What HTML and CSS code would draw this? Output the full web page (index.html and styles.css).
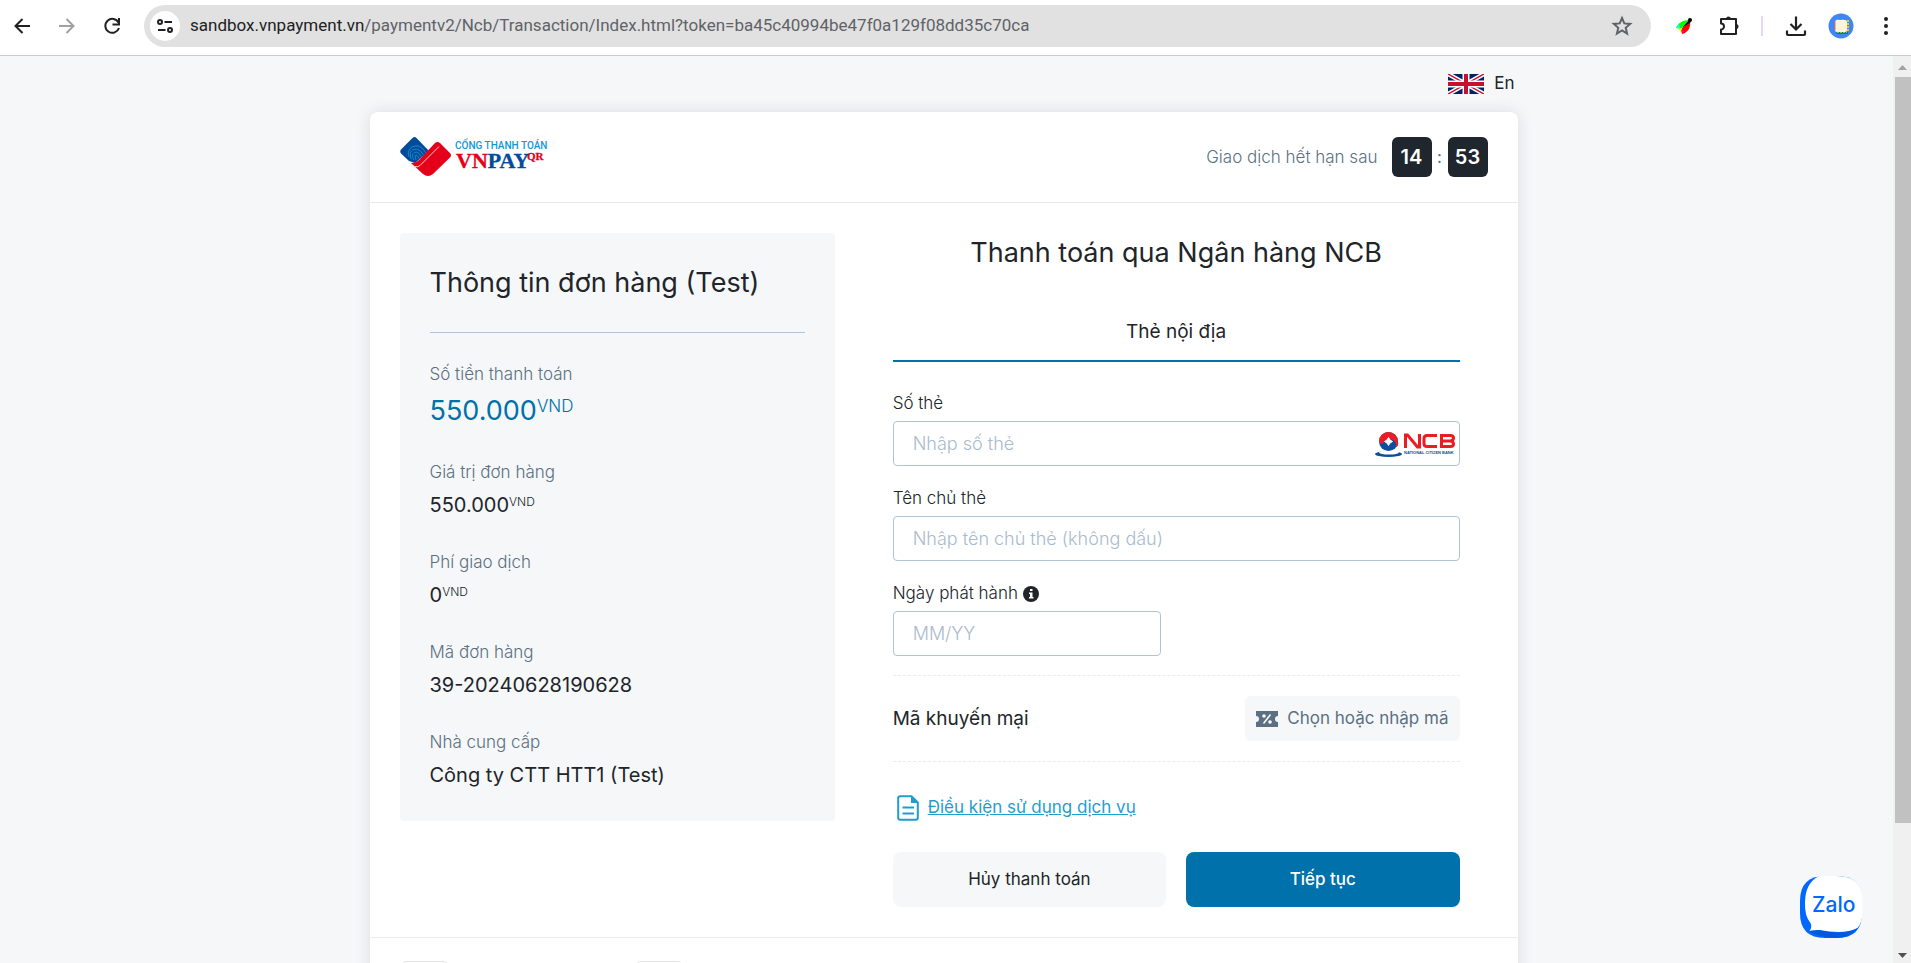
FILE: index.html
```html
<!DOCTYPE html>
<html lang="vi">
<head>
<meta charset="utf-8">
<title>Cổng thanh toán VNPAY</title>
<link rel="stylesheet" href="styles.css">
</head>
<body>
<header class="toolbar">
  <button class="tool" aria-label="Back"><svg width="20" height="20" viewBox="0 0 20 20" fill="none" stroke="#202124" stroke-width="2"><path d="M17 10H3M9.500 3 2.500 10l7 7"/></svg></button>
  <button class="tool" aria-label="Forward"><svg width="20" height="20" viewBox="0 0 20 20" fill="none" stroke="#a0a0a0" stroke-width="2"><path d="M1 10h14M8.500 3l7 7-7 7"/></svg></button>
  <button class="tool" aria-label="Reload"><svg width="20" height="20" viewBox="0 0 20 20" fill="none" stroke="#202124" stroke-width="2"><path d="M15.500 6.500A7 7 0 1 0 16 12"/><path d="M16 2v6.500H9.500"/></svg></button>
  <div class="omnibox">
    <button class="site-info" aria-label="Site information"><svg width="18" height="18" viewBox="0 0 18 18" fill="none" stroke="#202124" stroke-width="2"><circle cx="4" cy="5" r="2"/><path d="M8.500 5H16M2 13h7.500"/><circle cx="14" cy="13" r="2"/></svg></button>
    <span class="url"><span class="host">sandbox.vnpayment.vn</span>/paymentv2/Ncb/Transaction/Index.html?token=ba45c40994be47f0a129f08dd35c70ca</span>
    <button class="star" aria-label="Bookmark"><svg width="22" height="22" viewBox="0 0 22 22" fill="none" stroke="#5f6368" stroke-width="2"><path d="M11 3l2.300 5.400 5.900.5-4.500 3.900 1.400 5.800L11 15.500l-5.100 3.100 1.400-5.800-4.500-3.900 5.900-.5z"/></svg></button>
  </div>
  <div class="extensions">
    <button class="tool" aria-label="IDM"><svg width="20" height="20" viewBox="0 0 20 20"><path d="M2 12C4 7 9 4 15 4L7 13z" fill="#0f0"/><path d="M2 12l3-4 1 4z" fill="#0ff"/><path d="M16 6c1 6-3 11-8 12l-1-5z" fill="#f00"/><path d="M4 13l4-1-1 5z" fill="#ff0"/><path d="M8 17l-1-3 3 1z" fill="#f0f"/><path d="M8 12l7-8 2 2z" fill="#000"/><circle cx="16" cy="4" r="2" fill="#000"/></svg></button>
    <button class="tool" aria-label="Extensions"><svg width="24" height="24" viewBox="0 0 24 24"><path d="M4 5h15v15H4v-4.500a3 3 0 0 0 0-6z" fill="none" stroke="#202124" stroke-width="2" stroke-linejoin="round"/><path d="M9 5a2.500 2.500 0 0 1 5 0zM19 10a2.500 2.500 0 0 1 0 5z" fill="#202124"/></svg></button>
    <span class="divider"></span>
    <button class="tool" aria-label="Downloads"><svg width="24" height="24" viewBox="0 0 24 24" fill="none" stroke="#202124" stroke-width="2.200"><path d="M12 2.500V15M6.500 10l5.500 5.500 5.500-5.500M3 16.500V20q0 1 1 1h16q1 0 1-1v-3.500"/></svg></button>
    <button class="tool" aria-label="Profile"><svg width="26" height="26" viewBox="0 0 26 26"><circle cx="13" cy="13" r="12.500" fill="#4285f4"/><path d="M8 19h12v2H9z" fill="#1a5fe0"/><rect x="7" y="7" width="12" height="12" rx="2" fill="#fff4d9"/><path d="M8 6.500h10" stroke="#5bd12a" stroke-dasharray="3 2"/><path d="M7 8v9" stroke="#e8743a"/><path d="M20 7v12" stroke="#f3c81c" stroke-width="2" stroke-dasharray="2 1"/><path d="M9 19.500h10" stroke="#7fd13a" stroke-dasharray="2 1"/></svg></button>
    <button class="tool" aria-label="Menu"><svg width="20" height="20" viewBox="0 0 20 20" fill="#202124"><circle cx="10" cy="3" r="2"/><circle cx="10" cy="10" r="2"/><circle cx="10" cy="17" r="2"/></svg></button>
  </div>
</header>
<div class="viewport">
  <main class="page">
    <div class="shell">
      <div class="language">
        <a class="lang-link" href="#en">
          <svg width="36" height="20" viewBox="0 0 36 20"><rect width="36" height="20" fill="#012169"/><path d="M0 0l36 20M36 0L0 20" stroke="#fff" stroke-width="4.500"/><path d="M0 0l36 20M36 0L0 20" stroke="#c8102e" stroke-width="1.500"/><path d="M18 0v20M0 10h36" stroke="#fff" stroke-width="7"/><path d="M18 0v20M0 10h36" stroke="#c8102e" stroke-width="4"/></svg>
          <span>En</span>
        </a>
      </div>
      <section class="card">
        <div class="card-head">
          <svg class="logo" width="148" height="40" viewBox="0 0 148 40" role="img" aria-label="Cổng thanh toán VNPAY QR">
            <path d="M1 12.500 12.500 1q2-2 4 0L29 14 15 26 9 24 1 16.500q-1.500-2 0-4z" fill="#004c9b"/>
            <g fill="none" stroke="#1b86d0" stroke-width="1"><path d="M9 20q-2-7 3-10 6-3 11 2l3 4"/><path d="M11 22q-2-7 1.500-9 4.500-2.500 8 1l3 4"/><path d="M13.500 23q-2-6 .5-7.500 3-1.500 5 1l2.500 3.500"/><path d="M16 23l-1-4q1-2 2.500 0l2 3"/></g>
            <path d="M11 26q5 0 8-3L35 6q2.500-2 5 0l10 10q2 2 0 4.500L33 37q-5 4-10 0z" fill="#e50019"/>
            <path d="M15 29.500q3 1 5-1L39 9.500" fill="none" stroke="#fff" stroke-width="1" opacity=".8"/>
            <text x="55" y="12" class="logo-top">CỔNG THANH TOÁN</text>
            <text x="56" y="31" class="logo-name"><tspan class="red">VN</tspan><tspan class="blue">PAY</tspan></text>
            <text x="127" y="23" class="logo-qr red">QR</text>
          </svg>
          <div class="timer">
            <span class="timer-label">Giao dịch hết hạn sau</span>
            <span class="timer-box">14</span><span class="timer-sep">:</span><span class="timer-box">53</span>
          </div>
        </div>
        <div class="card-body">
          <section class="order">
            <h2 class="order-title">Thông tin đơn hàng (Test)</h2>
            <dl class="order-list">
              <div class="order-item total"><dt>Số tiền thanh toán</dt><dd>550.000<span class="unit">VND</span></dd></div>
              <div class="order-item"><dt>Giá trị đơn hàng</dt><dd>550.000<span class="unit">VND</span></dd></div>
              <div class="order-item"><dt>Phí giao dịch</dt><dd>0<span class="unit">VND</span></dd></div>
              <div class="order-item"><dt>Mã đơn hàng</dt><dd>39-20240628190628</dd></div>
              <div class="order-item"><dt>Nhà cung cấp</dt><dd>Công ty CTT HTT1 (Test)</dd></div>
            </dl>
          </section>
          <form class="pay">
            <h1 class="pay-title">Thanh toán qua Ngân hàng NCB</h1>
            <div class="tab">Thẻ nội địa</div>
            <div class="field">
              <label for="card-number">Số thẻ</label>
              <div class="control">
                <input id="card-number" type="text" placeholder="Nhập số thẻ">
                <svg class="bank" width="80" height="28" viewBox="0 0 80 28" role="img" aria-label="NCB">
                  <ellipse cx="13.500" cy="24" rx="13.500" ry="3" fill="#0d4f9e"/><ellipse cx="14" cy="22.500" rx="10" ry="2" fill="#fff"/>
                  <circle cx="13.500" cy="11.500" r="9.500" fill="#0d4f9e"/><path d="M4 11.500a9.500 9.500 0 0 1 19 0q1 4-2 6 1-6-4-8-6-2-8 3-3 3-5-1z" fill="#ed1c24"/><path d="M13.500 7.500q1 3 4 4-3 1-4 4-1-3-4-4 3-1 4-4z" fill="#fff" stroke="#fff"/>
                  <g fill="none" stroke="#ed1c24" stroke-width="3"><path d="M30.500 18V5h2l10 12h2V4"/><path d="M62 5.500H52q-3 0-3 3v5q0 3 3 3h10"/><path d="M66 11h12M66.500 5.500h9q3 0 3 2.500t-3 3q3 .5 3 3t-3 2.500h-9z"/></g>
                  <text x="29" y="24" class="bank-name">NATIONAL CITIZEN BANK</text>
                </svg>
              </div>
            </div>
            <div class="field">
              <label for="card-holder">Tên chủ thẻ</label>
              <input id="card-holder" type="text" placeholder="Nhập tên chủ thẻ (không dấu)">
            </div>
            <div class="field half">
              <label for="issue-date">Ngày phát hành
                <svg width="16" height="16" viewBox="0 0 16 16"><circle cx="8" cy="8" r="8" fill="#212529"/><path d="M7 3h2.500v2H7zM6 6.500h3.500V11h1v1.500H6V11h1V8H6z" fill="#fff"/></svg>
              </label>
              <input id="issue-date" type="text" placeholder="MM/YY">
            </div>
            <div class="promo">
              <span class="promo-label">Mã khuyến mại</span>
              <button type="button" class="promo-button">
                <svg width="22" height="16" viewBox="0 0 22 16"><path d="M0 0h22v5a3 3 0 0 0 0 6v5H0v-5a3 3 0 0 0 0-6z" fill="#5b7083"/><path d="M7.500 12.500l7-9" stroke="#fff" stroke-width="1.500"/><circle cx="8" cy="5" r="1.800" fill="#fff"/><circle cx="14" cy="11" r="1.800" fill="#fff"/></svg>
                <span>Chọn hoặc nhập mã</span>
              </button>
            </div>
            <a class="terms" href="#terms">
              <svg width="22" height="26" viewBox="0 0 22 26"><path d="M3 1.200h11.500l6.300 6.300V23q0 1.800-1.800 1.800H3Q1.200 24.800 1.200 23V3Q1.200 1.200 3 1.200z" fill="none" stroke="#1f9ecd" stroke-width="2"/><path d="M14 1v7h7z" fill="#1f9ecd"/><path d="M5.500 12.500h11.500M5.500 18.500h11.500" stroke="#1f9ecd" stroke-width="2"/></svg>
              <span>Điều kiện sử dụng dịch vụ</span>
            </a>
            <div class="actions">
              <button type="button" class="btn">Hủy thanh toán</button>
              <button type="submit" class="btn primary">Tiếp tục</button>
            </div>
          </form>
        </div>
        <div class="card-foot"><span class="contact"></span><span class="contact"></span></div>
      </section>
    </div>
  </main>
  <div class="scrollbar">
    <svg width="17" height="21" viewBox="0 0 17 21"><path d="M4 14l4.500-5 4.500 5z" fill="#a3a3a3"/></svg>
    <span class="thumb"></span>
    <svg width="17" height="17" viewBox="0 0 17 17"><path d="M4 7l4.500 5L13 7z" fill="#505050"/></svg>
  </div>
</div>
<a class="zalo" href="#zalo" aria-label="Zalo">
  <svg width="64" height="64" viewBox="0 0 64 64"><path d="M26 1h12q25 0 25 25v12q0 25-25 25H26Q1 63 1 38V26Q1 1 26 1z" fill="#0068ff"/><path d="M20 1h18q25.500 0 25.500 25v12q0 9-5 15-13 7-38 2l-10 1q3-4 1-8-6-7-5.500-20Q6 8 20 1z" fill="#fff"/><path d="M10 56q10 7 26 7 15 0 23-10-14 8-40 2z" fill="#005ae0"/><text x="13" y="37" class="zalo-text">Zalo</text></svg>
</a>
</body>
</html>
```
FILE: styles.css
```css
* { box-sizing: border-box; }
body {
  margin: 0;
  height: 100vh;
  display: flex;
  flex-direction: column;
  overflow: hidden;
  font-family: Inter, "Noto Sans", sans-serif;
  font-size: 17px;
  line-height: 27px;
  color: #212529;
  background: #f5f7f9;
}
h1, h2, dl, dd { margin: 0; font-weight: 400; }
button, input { font: inherit; color: inherit; }
svg { display: block; flex: none; }

/* Browser toolbar */
.toolbar {
  flex: none;
  display: flex;
  align-items: center;
  height: 56px;
  padding: 0 3px 4px 0;
  background: #fff;
  border-bottom: 1px solid #c9cccf;
}
.tool {
  display: grid;
  place-items: center;
  width: 45px;
  height: 36px;
  padding: 0;
  border: 0;
  background: none;
}
.omnibox {
  flex: 1;
  display: flex;
  align-items: center;
  height: 42px;
  margin-left: 9px;
  padding: 0 18px 0 6px;
  border-radius: 21px;
  background: #e1e1e1;
}
.site-info {
  display: grid;
  place-items: center;
  width: 30px;
  height: 30px;
  padding: 0;
  border: 0;
  border-radius: 50%;
  background: #fff;
}
.url {
  flex: 1;
  margin-left: 10px;
  font-family: Roboto, "Noto Sans", sans-serif;
  font-size: 17px;
  white-space: nowrap;
  color: #5f6368;
}
.host { color: #202124; }
.star { padding: 0; border: 0; background: none; }
.extensions { display: flex; align-items: center; margin-left: 10px; }
.divider { width: 2px; height: 20px; margin: 0 10px; background: #e8d5fb; }

/* Page */
.viewport { flex: 1; min-height: 0; display: flex; }
.page { flex: 1; min-width: 0; overflow: hidden; padding: 0 6px 0 0; }
.shell { max-width: 1148px; margin: 0 auto; }
.language { display: flex; justify-content: flex-end; padding: 14px 3px 15px; }
.lang-link { display: flex; align-items: center; gap: 10px; color: inherit; text-decoration: none; }
.card {
  background: #fff;
  border-radius: 8px;
  box-shadow: 0 0 16px rgba(33, 37, 41, 0.12);
}
.card-head {
  display: flex;
  justify-content: space-between;
  align-items: center;
  padding: 25px 30px;
  border-bottom: 1px solid #e7e9ee;
}
.logo-top { font: 500 10px Roboto, sans-serif; fill: #1296d8; }
.logo-name { font: 700 22px "Liberation Serif", serif; }
.logo-qr { font: 700 11px "Liberation Serif", serif; }
.red { fill: #e50019; stroke: #e50019; stroke-width: 0.3px; }
.blue { fill: #004c9b; stroke: #004c9b; stroke-width: 0.3px; }
.timer { display: flex; align-items: center; color: #5b7083; }
.timer-label { margin-right: 14px; font-weight: 300; }
.timer-box {
  width: 40px;
  border-radius: 6px;
  background: #20262d;
  color: #fff;
  font-size: 20px;
  font-weight: 600;
  line-height: 40px;
  text-align: center;
}
.timer-sep { width: 16px; text-align: center; }

.card-body { display: flex; align-items: flex-start; padding: 30px; }
.order {
  flex: 0 0 40%;
  padding: 30px;
  border-radius: 4px;
  background: #f5f7f9;
}
.order-title {
  padding-bottom: 30px;
  border-bottom: 1px solid #b0c4d6;
  font-size: 27px;
  line-height: 39px;
}
.order-list { display: grid; gap: 28px; padding-top: 28px; }
.order-item dt { font-weight: 300; color: #5b7083; }
.order-item dd { margin-top: 4px; font-size: 20px; line-height: 31px; }
.order-item.total dd { margin-top: 3px; font-size: 27px; line-height: 40px; color: #0071aa; }
.unit { font-size: 12px; font-weight: 300; vertical-align: 6px; line-height: 1; }
.total .unit { font-size: 17px; vertical-align: 8px; }

.pay { flex: 1; min-width: 0; padding: 0 28px 0 58px; }
.pay-title { font-size: 27px; line-height: 39px; text-align: center; }
.tab {
  margin: 42px 0 28px;
  padding-bottom: 11px;
  border-bottom: 2px solid #0071aa;
  font-size: 19px;
  line-height: 35px;
  text-align: center;
}
.field { display: grid; gap: 4px; margin-bottom: 19px; }
.field label { display: flex; align-items: center; gap: 5px; font-weight: 300; }
.field input {
  width: 100%;
  height: 45px;
  padding: 0 19px;
  border: 1px solid #b0c4d6;
  border-radius: 4px;
  background: #fff;
  font-size: 18px;
  font-weight: 300;
}
.field input::placeholder { color: #a9bbcc; opacity: 1; }
.half { width: 268px; }
.control { position: relative; }
.bank { position: absolute; right: 5px; top: 9px; }
.bank-name { font: 700 4px "Liberation Sans", sans-serif; fill: #0d4f9e; }
.promo {
  display: flex;
  justify-content: space-between;
  align-items: center;
  padding: 20px 0;
  border: dashed #e9ecef;
  border-width: 1px 0;
}
.promo-label { font-size: 19px; }
.promo-button {
  display: flex;
  align-items: center;
  gap: 9px;
  height: 45px;
  padding: 0 11px;
  border: 0;
  border-radius: 6px;
  background: #f5f7f9;
  color: #5b7083;
}
.terms { display: flex; align-items: center; gap: 9px; margin: 32px 0 31px 4px; color: #1f9ecd; }
.actions { display: grid; grid-template-columns: 1fr 1fr; gap: 20px; }
.btn { height: 55px; border: 0; border-radius: 8px; background: #f5f7f9; }
.primary { background: #0071aa; color: #fff; font-weight: 500; }
.card-foot { display: flex; gap: 186px; padding: 23px 31px 40px; border-top: 1px solid #ececec; }
.contact { width: 48px; height: 48px; border: 1px solid #e4e4e4; border-radius: 6px; }

.scrollbar { display: flex; flex-direction: column; align-items: flex-end; width: 18px; background: #f0f0f0; }
.thumb { flex: 0 0 746px; width: 16px; background: #c1c1c1; margin-bottom: auto; }
.zalo { position: absolute; right: 48px; bottom: 24px; }
.zalo-text { font: 500 21px Inter, sans-serif; fill: #0068ff; }
```
